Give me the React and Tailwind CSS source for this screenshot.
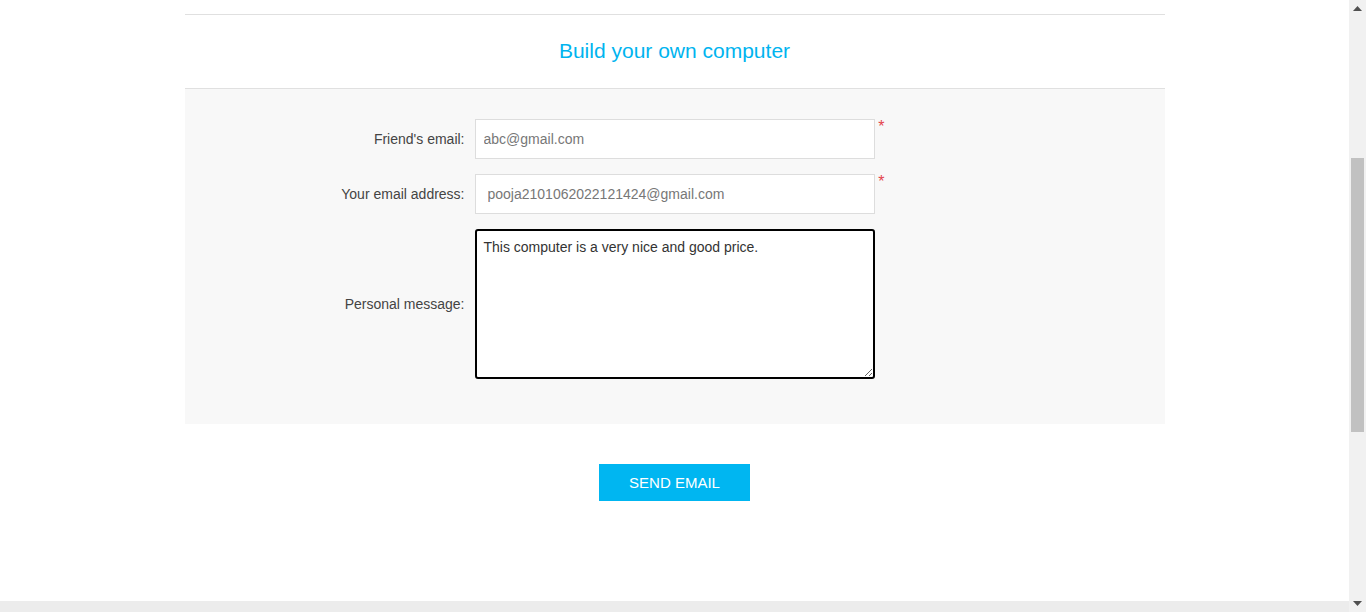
export default function App() {
  return (
    <div className="flex h-[612px] w-full overflow-hidden bg-white font-['Liberation_Sans',Arial,sans-serif]">
      <div className="flex flex-1 flex-col">
        <div className="h-[601px] bg-white">
          <div className="mx-auto w-[980px] pt-[14px]">
            <div className="border-t border-b border-[#e0e0e0] h-[75px] pb-[3px] flex items-center justify-center">
              <h1 className="text-[21px] text-[#00b4ef] leading-none">Build your own computer</h1>
            </div>
            <div className="bg-[#f8f8f8] pt-[30px] pb-[45px] flex flex-col gap-[15px]">
              <div className="flex items-center">
                <label className="w-[290px] pr-[10px] text-right text-[14px] text-[#444]">Friend's email:</label>
                <div className="relative">
                  <input
                    className="h-[40px] w-[400px] border border-[#ddd] bg-white px-2 text-[14px] text-[#777] outline-none"
                    defaultValue="abc@gmail.com"
                  />
                  <span className="absolute -right-[10px] top-0 text-[16px] leading-none text-[#e4434b]">*</span>
                </div>
              </div>
              <div className="flex items-center">
                <label className="w-[290px] pr-[10px] text-right text-[14px] text-[#444]">Your email address:</label>
                <div className="relative">
                  <input
                    className="h-[40px] w-[400px] border border-[#ddd] bg-white pl-3 pr-2 text-[14px] text-[#777] outline-none"
                    defaultValue="pooja2101062022121424@gmail.com"
                  />
                  <span className="absolute -right-[10px] top-0 text-[16px] leading-none text-[#e4434b]">*</span>
                </div>
              </div>
              <div className="flex items-center">
                <label className="w-[290px] pr-[10px] text-right text-[14px] text-[#444]">Personal message:</label>
                <textarea
                  className="block h-[150px] w-[400px] rounded-[3px] border-2 border-black bg-white px-[7px] py-[6px] text-[14px] text-[#333] outline-none"
                  defaultValue="This computer is a very nice and good price."
                />
              </div>
            </div>
            <div className="flex justify-center pt-[40px]">
              <button className="h-[37px] w-[151px] pt-[1px] bg-[#00b6f1] text-[15px] uppercase text-white">Send email</button>
            </div>
          </div>
        </div>
        <div className="h-[11px] bg-[#ececec]"></div>
      </div>
      <div className="flex w-[17px] flex-col items-center bg-[#f1f1f1]">
        <div className="flex h-[17px] items-center justify-center">
          <svg width="9" height="5" viewBox="0 0 9 5"><path d="M4.5 0L9 5H0z" fill="#505050" /></svg>
        </div>
        <div className="mt-[141px] h-[274px] w-[13px] bg-[#c1c1c1]"></div>
        <div className="flex-1"></div>
        <div className="flex h-[17px] items-center justify-center">
          <svg width="9" height="5" viewBox="0 0 9 5"><path d="M0 0H9L4.5 5z" fill="#505050" /></svg>
        </div>
      </div>
    </div>
  );
}
